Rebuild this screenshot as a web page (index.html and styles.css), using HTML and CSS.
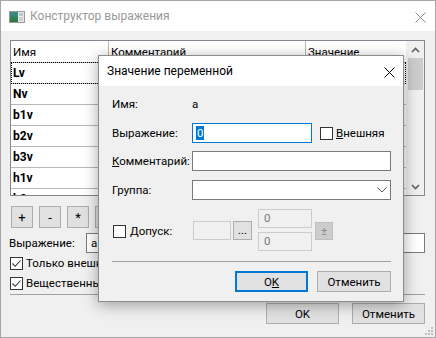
FILE: index.html
```html
<!DOCTYPE html>
<html>
<head>
  <meta charset="utf-8">
  <title>Конструктор выражения</title>
  <link rel="stylesheet" href="styles.css">
</head>
<body>
  <div class="window">
    <div class="titlebar">
      <svg class="app-icon" width="16" height="12" viewBox="0 0 16 12">
        <rect x="0.5" y="0.5" width="15" height="11" fill="#e8e8e8" stroke="#9a9a9a"/>
        <defs>
          <linearGradient id="ig" x1="0" y1="0" x2="0" y2="1">
            <stop offset="0" stop-color="#3c8c8c"/>
            <stop offset="1" stop-color="#2a7a3c"/>
          </linearGradient>
        </defs>
        <rect x="1" y="1" width="8" height="10" fill="url(#ig)"/>
        <rect x="10" y="2" width="4" height="3" fill="#b8c8c8"/>
        <rect x="10" y="6" width="4" height="4" fill="#d0d0d0"/>
      </svg>
      <div class="title">Конструктор выражения</div>
      <svg class="close-back" width="11" height="11" viewBox="0 0 11 11">
        <path d="M0.5 0.5 L10.5 10.5 M10.5 0.5 L0.5 10.5" stroke="#8a8a8a" stroke-width="1"/>
      </svg>
    </div>

    <div class="window-body">
      <div class="grid">
        <div class="grid-table">
          <div class="grid-row header">
            <div class="cell c1">Имя</div>
            <div class="cell c2">Комментарий</div>
            <div class="cell c3">Значение</div>
          </div>
          <div class="grid-row current"><div class="cell c1">Lv</div><div class="cell c2"></div><div class="cell c3"></div></div>
          <div class="grid-row"><div class="cell c1">Nv</div><div class="cell c2"></div><div class="cell c3"></div></div>
          <div class="grid-row"><div class="cell c1">b1v</div><div class="cell c2"></div><div class="cell c3"></div></div>
          <div class="grid-row"><div class="cell c1">b2v</div><div class="cell c2"></div><div class="cell c3"></div></div>
          <div class="grid-row"><div class="cell c1">b3v</div><div class="cell c2"></div><div class="cell c3"></div></div>
          <div class="grid-row"><div class="cell c1">h1v</div><div class="cell c2"></div><div class="cell c3"></div></div>
          <div class="grid-row"><div class="cell c1">h2v</div><div class="cell c2"></div><div class="cell c3"></div></div>
        </div>
        <div class="scrollbar">
          <svg class="arrow" width="9" height="6" viewBox="0 0 9 6">
            <path d="M1 5 L4.5 1.5 L8 5" fill="none" stroke="#606060" stroke-width="1.6"/>
          </svg>
          <div class="track"><div class="thumb"></div></div>
          <svg class="arrow" width="9" height="6" viewBox="0 0 9 6">
            <path d="M1 1 L4.5 4.5 L8 1" fill="none" stroke="#606060" stroke-width="1.6"/>
          </svg>
        </div>
      </div>

      <div class="op-buttons">
        <button class="op">+</button>
        <button class="op">-</button>
        <button class="op">*</button>
        <button class="op">/</button>
        <button class="op">(</button>
      </div>

      <div class="expr-row">
        <span class="label">Выражение:</span>
        <div class="textbox wide">a</div>
      </div>

      <div class="check-row">
        <span class="box">
          <svg width="11" height="11" viewBox="0 0 11 11"><path d="M1.5 5.5 L4.2 8.3 L9.5 2.5" fill="none" stroke="#333" stroke-width="1.1"/></svg>
        </span>
        <span>Только внешние</span>
      </div>
      <div class="check-row">
        <span class="box">
          <svg width="11" height="11" viewBox="0 0 11 11"><path d="M1.5 5.5 L4.2 8.3 L9.5 2.5" fill="none" stroke="#333" stroke-width="1.1"/></svg>
        </span>
        <span>Вещественные</span>
      </div>

      <div class="separator"></div>

      <div class="buttons">
        <button class="btn">OK</button>
        <button class="btn">Отменить</button>
      </div>
    </div>

    <svg class="grip" width="8" height="8" viewBox="0 0 8 8">
      <rect x="6" y="0" width="2" height="2" fill="#bdbdbd"/>
      <rect x="3" y="3" width="2" height="2" fill="#bdbdbd"/>
      <rect x="6" y="3" width="2" height="2" fill="#bdbdbd"/>
      <rect x="0" y="6" width="2" height="2" fill="#bdbdbd"/>
      <rect x="3" y="6" width="2" height="2" fill="#bdbdbd"/>
      <rect x="6" y="6" width="2" height="2" fill="#bdbdbd"/>
    </svg>

    <!-- Modal dialog over the builder window -->
    <div class="modal">
      <div class="modal-title">
        <div class="title-text">Значение переменной</div>
        <svg class="close" width="11" height="11" viewBox="0 0 11 11">
          <path d="M0.5 0.5 L10.5 10.5 M10.5 0.5 L0.5 10.5" stroke="#000" stroke-width="1"/>
        </svg>
      </div>
      <div class="modal-body">
        <div class="form-row first">
          <span class="form-label">Имя:</span>
          <span>a</span>
        </div>
        <div class="form-row gap9">
          <span class="form-label">Выражение:</span>
          <div class="textbox focused expr"><span class="selected">0</span></div>
          <span class="box small-gap"></span>
          <span><u>В</u>нешняя</span>
        </div>
        <div class="form-row gap8">
          <span class="form-label"><u>К</u>омментарий:</span>
          <div class="textbox full"></div>
        </div>
        <div class="form-row gap9">
          <span class="form-label">Группа:</span>
          <div class="textbox full combo">
            <svg width="10" height="6" viewBox="0 0 10 6"><path d="M0.5 0.5 L5 5 L9.5 0.5" fill="none" stroke="#555" stroke-width="1"/></svg>
          </div>
        </div>
        <div class="form-row tolerance">
          <div class="tol-check">
            <span class="box"></span>
            <span>Допуск:</span>
          </div>
          <div class="textbox disabled tol-edit"></div>
          <button class="dots">...</button>
          <div class="tol-values">
            <div class="textbox disabled tol-num">0</div>
            <div class="textbox disabled tol-num">0</div>
          </div>
          <button class="pm" disabled>±</button>
        </div>
        <div class="separator modal-sep"></div>
        <div class="buttons modal-buttons">
          <button class="btn default">O<u>K</u></button>
          <button class="btn cancel">Отменить</button>
        </div>
      </div>
    </div>
  </div>
</body>
</html>
```

FILE: styles.css
```css
/* General Styles */
body {
  margin: 0;
  padding: 0;
  font-family: Roboto, "Noto Sans", sans-serif;
  font-size: 11.5px;
  color: #000000;
}

button {
  font-family: inherit;
  font-size: 11.5px;
  color: #000000;
  padding: 0;
}

.window {
  position: relative;
  width: 436px;
  height: 338px;
  box-sizing: border-box;
  border: 1px solid #a6a6a6;
  background-color: #f0f0f0;
  overflow: hidden;
}

/* Title bar */
.titlebar {
  height: 30px;
  background-color: #ffffff;
  display: flex;
  align-items: center;
}

.app-icon {
  margin-left: 8px;
  margin-top: 2px;
}

.title {
  margin-left: 5px;
  color: #999999;
  font-size: 12px;
  flex: 1;
}

.close-back {
  margin-right: 9px;
  margin-top: 2px;
}

.window-body {
  padding: 9px 10px 0 9px;
}

/* Grid */
.grid {
  display: flex;
  height: 156px;
  box-sizing: border-box;
  border: 1px solid #828790;
  background-color: #ffffff;
  overflow: hidden;
}

.grid-table {
  width: 395px;
}

.grid-row {
  display: flex;
  height: 20px;
  border-bottom: 1px solid #b9b9b9;
  box-sizing: content-box;
  font-weight: bold;
  font-size: 12px;
  position: relative;
}

.grid-row.header {
  height: 21px;
  font-weight: normal;
  font-size: 11.5px;
}

.grid-row.header .cell {
  border-right: 1px solid #b9b9b9;
}

.grid-row.header .c3 {
  border-right: none;
}

.grid-row.current::after {
  content: "";
  position: absolute;
  left: 0;
  top: -1px;
  right: 0;
  bottom: -1px;
  border: 1px dotted #000000;
}

.cell {
  display: flex;
  align-items: center;
  padding-left: 2px;
  box-sizing: border-box;
  white-space: nowrap;
}

.c1 {
  width: 98px;
}

.c2 {
  width: 197px;
}

.c3 {
  flex: 1;
}

.scrollbar {
  width: 18px;
  background-color: #f0f0f0;
  display: flex;
  flex-direction: column;
  align-items: center;
}

.scrollbar .arrow {
  margin: 6px 0 5px 0;
}

.track {
  flex: 1;
  width: 100%;
}

.thumb {
  margin: 0 auto;
  width: 15px;
  height: 32px;
  background-color: #cdcdcd;
}

/* Operator buttons */
.op-buttons {
  display: flex;
  gap: 6px;
  margin-top: 10px;
  margin-left: 1px;
}

.op {
  width: 22px;
  height: 22px;
  border: 1px solid #adadad;
  background-color: #e1e1e1;
  font-size: 13px;
}

/* Expression row */
.expr-row {
  display: flex;
  align-items: center;
  margin-top: 5px;
  margin-left: -1px;
  height: 20px;
}

.expr-row .label {
  width: 77px;
}

.textbox {
  height: 20px;
  box-sizing: border-box;
  border: 1px solid #7a7a7a;
  background-color: #ffffff;
  display: flex;
  align-items: center;
  padding-left: 4px;
}

.textbox.wide {
  flex: 1;
  margin-right: 0;
}

.check-row {
  display: flex;
  align-items: center;
  height: 20px;
  gap: 3px;
}

.check-row:first-of-type {
  margin-top: 4px;
}

.box {
  width: 13px;
  height: 13px;
  box-sizing: border-box;
  border: 1px solid #333333;
  background-color: #ffffff;
  display: inline-flex;
  align-items: center;
  justify-content: center;
  flex-shrink: 0;
}

.separator {
  border-top: 1px solid #a0a0a0;
  margin-top: 1px;
}

.buttons {
  display: flex;
  justify-content: flex-end;
  gap: 13px;
  margin-top: 8px;
}

.btn {
  width: 73px;
  height: 21px;
  border: 1px solid #adadad;
  background-color: #e1e1e1;
}

.grip {
  position: absolute;
  right: 2px;
  bottom: 2px;
}

/* Modal dialog */
.modal {
  position: absolute;
  left: 97px;
  top: 54px;
  width: 306px;
  height: 247px;
  box-sizing: border-box;
  border: 1px solid #8c8c8c;
  background-color: #f0f0f0;
  box-shadow: 0 3px 14px rgba(0, 0, 0, 0.35);
}

.modal-title {
  height: 30px;
  background-color: #ffffff;
  display: flex;
  align-items: center;
}

.title-text {
  flex: 1;
  margin-left: 8px;
  font-size: 12px;
}

.close {
  margin-right: 8px;
  margin-top: 2px;
}

.modal-body {
  padding: 0 12px 0 13px;
}

.form-row {
  display: flex;
  align-items: center;
  height: 20px;
}

.form-row.first {
  margin-top: 8px;
}

.form-row.gap9 {
  margin-top: 9px;
}

.form-row.gap8 {
  margin-top: 8px;
}

.form-label {
  width: 80px;
  flex-shrink: 0;
}

.textbox.expr {
  width: 120px;
  padding-left: 3px;
}

.textbox.focused {
  border-color: #0078d7;
}

.selected {
  background-color: #0078d7;
  color: #ffffff;
  line-height: 14px;
  padding: 0 1px;
}

.small-gap {
  margin-left: 8px;
  margin-right: 3px;
}

.textbox.full {
  flex: 1;
}

.textbox.combo {
  justify-content: flex-end;
  padding-right: 3px;
}

.form-row.tolerance {
  height: 43px;
  margin-top: 8px;
}

.tol-check {
  display: flex;
  align-items: center;
  gap: 4px;
  width: 80px;
  margin-left: 1px;
  margin-top: 3px;
}

.textbox.disabled {
  border-color: #cccccc;
  background-color: #f0f0f0;
  color: #7a7a7a;
}

.tol-edit {
  width: 38px;
  height: 19px;
  margin-top: 1px;
}

.dots {
  width: 19px;
  height: 19px;
  margin-left: 2px;
  margin-top: 1px;
  border: 1px solid #adadad;
  background-color: #e1e1e1;
  line-height: 10px;
}

.tol-values {
  display: flex;
  flex-direction: column;
  gap: 4px;
  margin-left: 6px;
}

.tol-num {
  width: 54px;
  height: 19px;
  padding-left: 5px;
}

.pm {
  width: 18px;
  height: 18px;
  margin-left: 3px;
  margin-top: 2px;
  border: 1px solid #bfbfbf;
  background-color: #cccccc;
  color: #8a8a8a;
}

.modal-sep {
  margin-top: 10px;
}

.modal-buttons {
  gap: 9px;
  margin-top: 9px;
}

.btn.default {
  border: 2px solid #0078d7;
  width: 73px;
}

.btn.cancel {
  width: 74px;
}
```
